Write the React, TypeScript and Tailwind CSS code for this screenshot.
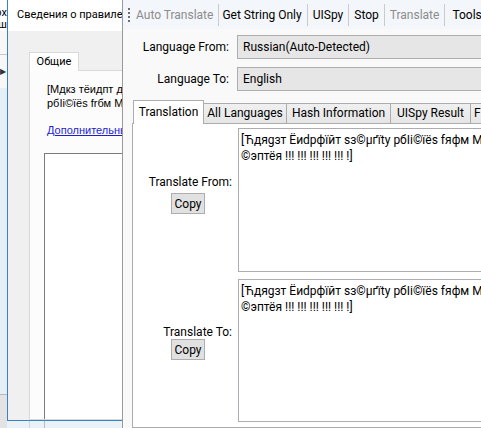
import React from "react";

function ToolItem({ label, disabled, extra }: { label: string; disabled?: boolean; extra?: string }) {
  return (
    <div className={`px-[5px] leading-[16px] whitespace-nowrap ${disabled ? "text-[#8c8c8c]" : "text-black"} ${extra ?? ""}`}>
      {label}
    </div>
  );
}

function Sep() {
  return <div className="w-px h-[22px] bg-[#cbcbcb] shrink-0" />;
}

function Tab({ label, w, selected, left }: { label: string; w: string; selected?: boolean; left?: boolean }) {
  if (selected) {
    return (
      <div className={`${w} h-[24px] shrink-0 relative z-10 bg-white border-l border-t border-r border-[#acacac] flex items-start justify-center pt-[3px] leading-[16px] whitespace-nowrap`}>
        {label}
      </div>
    );
  }
  return (
    <div className={`${w} h-[21px] shrink-0 bg-gradient-to-b from-[#f0f0f0] to-[#e5e5e5] border-t border-r border-[#acacac] flex items-start ${left ? "justify-start pl-[3px]" : "justify-center"} pt-[1px] leading-[16px] whitespace-nowrap overflow-hidden`}>
      {label}
    </div>
  );
}

const line1 = "[Ћдяgзт Ёиdрфїйт ѕз©µґїty рбIi©їёs fяфм Мїсяфѕфft Ёиdрфїйт Мдиддgзт]";
const line2 = "©эптёя !!! !!! !!! !!! !!! !]";

export default function App() {
  return (
    <div className="relative w-[481px] h-[428px] overflow-hidden bg-[#eaf2f8] font-['Roboto',sans-serif] text-[12px] text-black">
      {/* far-left background window */}
      <div className="absolute left-0 top-0 w-[7px] h-[428px] flex flex-col bg-[#f0f0f0] overflow-hidden">
        <div className="h-[31px] shrink-0 bg-white flex flex-col items-end pt-[7px] text-[11px] leading-[12px] whitespace-nowrap">
          <div>Вдох</div>
          <div>Ваш</div>
        </div>
        <div className="h-[24px] shrink-0 bg-[#f7f7f7] border-b border-[#c8c8c8]" />
        <div className="h-[33px] shrink-0 bg-[#f7f7f7] flex items-center text-[8px] leading-[8px] text-[#333]">▶</div>
        <div className="h-[307px] shrink-0 bg-[#e4eef7] border-b border-[#b9b9b9]" />
        <div className="flex-1 bg-[#e3e3e3]" />
      </div>

      {/* faint lines under the middle window */}
      <div className="absolute left-[29px] top-[420px] w-px h-[8px] bg-[#d0d6da]" />
      <div className="absolute left-[44px] top-[420px] w-px h-[8px] bg-[#b8bec2]" />

      {/* middle window: Сведения о правиле */}
      <div className="absolute left-[7px] top-0 w-[220px] h-[421px] flex flex-col bg-[#f0f0f0] border-l border-b border-[#3a82c6] overflow-hidden">
        <div className="h-[31px] shrink-0 bg-white flex items-center pl-[9px] text-[11px] whitespace-nowrap">
          Сведения о правиле брандмауэра
        </div>
        <div className="flex-1 min-h-0 flex flex-col pl-[21px] pt-[21px]">
          <div className="w-[50px] h-[19px] shrink-0 relative z-10 -mb-px bg-white border-l border-t border-r border-[#d9d9d9] flex items-center justify-center text-[11px]">
            Общие
          </div>
          <div className="flex-1 min-h-0 flex flex-col bg-[#fcfcfc] border border-[#d9d9d9] pl-[14px] pt-[11px]">
            <div className="pl-[3px] font-['Liberation_Sans',sans-serif] text-[11px] leading-[14px] whitespace-nowrap">
              <div>[Мдкз тёидпт дфжи ѕз©µґїty</div>
              <div>рбIi©ïës frбм Мїсяфѕфft</div>
              <div className="mt-[13px] text-[#1c1cd4] underline">Дополнительные сведения</div>
            </div>
            <div className="mt-[16px] flex-1 bg-white border-l border-t border-[#7c7c7c]" />
          </div>
        </div>
      </div>

      {/* front window: translator */}
      <div className="absolute left-[122px] top-0 w-[420px] h-[428px] flex flex-col bg-[#f9f9f9] border-l border-[#9a9a9a]">
        {/* toolbar */}
        <div className="h-[29px] shrink-0 bg-[#f3f6fa] flex items-center">
          <div className="ml-[5px] w-[3px] shrink-0 flex flex-col gap-[2px] pt-[1px]">
            <div className="w-[2px] h-[2px] bg-[#6e6e6e]" />
            <div className="w-[2px] h-[2px] bg-[#6e6e6e]" />
            <div className="w-[2px] h-[2px] bg-[#6e6e6e]" />
            <div className="w-[2px] h-[2px] bg-[#6e6e6e]" />
          </div>
          <ToolItem label="Auto Translate" disabled />
          <Sep />
          <ToolItem label="Get String Only" extra="pl-[3px]" />
          <Sep />
          <ToolItem label="UISpy" />
          <Sep />
          <ToolItem label="Stop" />
          <Sep />
          <ToolItem label="Translate" disabled />
          <Sep />
          <ToolItem label="Tools" extra="pl-[7px]" />
        </div>

        {/* language rows */}
        <div className="mt-[6px] flex items-center h-[24px] shrink-0">
          <div className="w-[106px] text-right whitespace-nowrap">Language From:</div>
          <div className="ml-[8px] flex-1 h-[24px] bg-[#e6e6e6] border border-[#adadad] pl-[5px] flex items-center">
            Russian(Auto-Detected)
          </div>
        </div>
        <div className="mt-[8px] flex items-center h-[24px] shrink-0">
          <div className="w-[106px] text-right whitespace-nowrap">Language To:</div>
          <div className="ml-[8px] flex-1 h-[24px] bg-[#e6e6e6] border border-[#adadad] pl-[5px] flex items-center">
            English
          </div>
        </div>

        {/* tabs */}
        <div className="mt-[9px] ml-[9px] flex-1 min-h-0 flex flex-col">
          <div className="h-[24px] shrink-0 flex items-end pl-px">
            <Tab label="Translation" w="w-[71px]" selected />
            <Tab label="All Languages" w="w-[83px]" />
            <Tab label="Hash Information" w="w-[104px]" />
            <Tab label="UISpy Result" w="w-[80px]" />
            <Tab label="Find Result" w="w-[70px]" left />
          </div>
          <div className="-mt-px flex-1 min-h-0 bg-white border border-[#acacac] pt-[4px] flex flex-col gap-[7px]">
            <div className="flex shrink-0">
              <div className="w-[105px] shrink-0 pt-[46px] flex flex-col">
                <div className="text-right pr-[6px] leading-[16px] whitespace-nowrap">Translate From:</div>
                <div className="ml-[38px] mt-[3px] w-[34px] h-[21px] bg-[#e1e1e1] border border-[#adadad] flex items-center justify-center leading-[16px]">
                  Copy
                </div>
              </div>
              <div className="flex-1 h-[144px] border border-[#abadb3] bg-white pl-[2px] pt-[3px] leading-[16px] whitespace-nowrap overflow-hidden">
                <div>{line1}</div>
                <div>{line2}</div>
              </div>
            </div>
            <div className="flex shrink-0">
              <div className="w-[105px] shrink-0 pt-[45px] flex flex-col">
                <div className="text-right pr-[6px] leading-[16px] whitespace-nowrap">Translate To:</div>
                <div className="ml-[38px] -mt-px w-[34px] h-[21px] bg-[#e1e1e1] border border-[#adadad] flex items-center justify-center leading-[16px]">
                  Copy
                </div>
              </div>
              <div className="flex-1 h-[143px] border border-[#abadb3] bg-white pl-[2px] pt-[3px] leading-[16px] whitespace-nowrap overflow-hidden">
                <div>{line1}</div>
                <div>{line2}</div>
              </div>
            </div>
          </div>
        </div>
      </div>
    </div>
  );
}
